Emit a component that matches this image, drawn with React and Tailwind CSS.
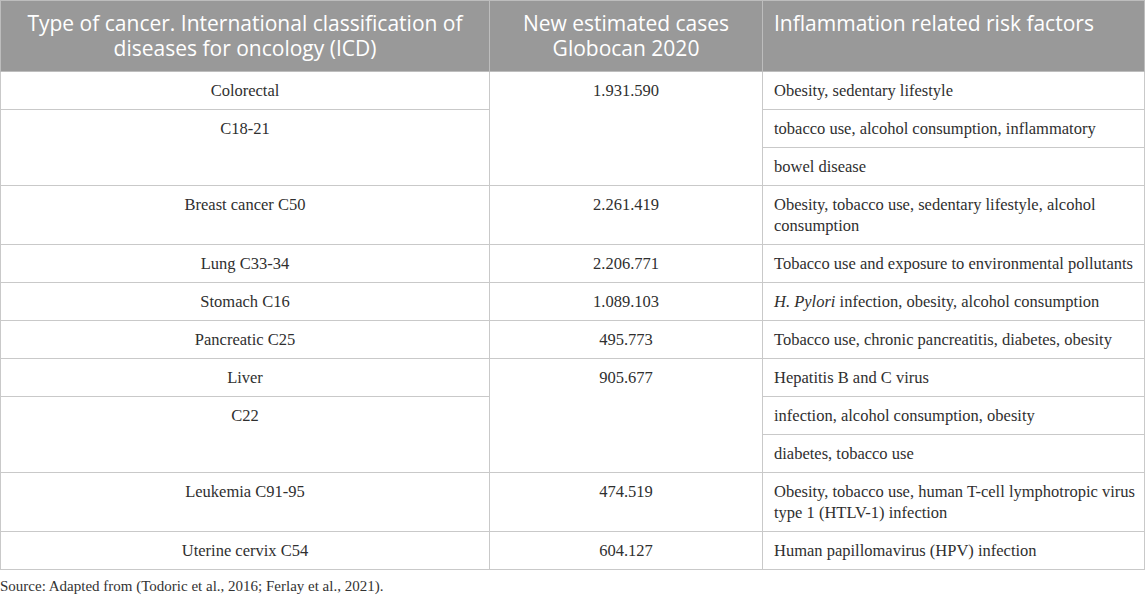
import React from 'react';

const rows = [
  { type: 'Colorectal', cases: '1.931.590', casesSpan: 3, risk: 'Obesity, sedentary lifestyle' },
  { type: 'C18-21', typeSpan: 2, risk: 'tobacco use, alcohol consumption, inflammatory' },
  { risk: 'bowel disease' },
  { type: 'Breast cancer C50', cases: '2.261.419', risk: 'Obesity, tobacco use, sedentary lifestyle, alcohol consumption' },
  { type: 'Lung C33-34', cases: '2.206.771', risk: 'Tobacco use and exposure to environmental pollutants' },
  { type: 'Stomach C16', cases: '1.089.103', risk: (<><i>H. Pylori</i> infection, obesity, alcohol consumption</>) },
  { type: 'Pancreatic C25', cases: '495.773', risk: 'Tobacco use, chronic pancreatitis, diabetes, obesity' },
  { type: 'Liver', cases: '905.677', casesSpan: 3, risk: 'Hepatitis B and C virus' },
  { type: 'C22', typeSpan: 2, risk: 'infection, alcohol consumption, obesity' },
  { risk: 'diabetes, tobacco use' },
  { type: 'Leukemia C91-95', cases: '474.519', risk: 'Obesity, tobacco use, human T-cell lymphotropic virus type 1 (HTLV-1) infection' },
  { type: 'Uterine cervix C54', cases: '604.127', risk: 'Human papillomavirus (HPV) infection' },
];

export default function App() {
  const cell = "border border-[#c9c9c9] align-top pt-[8px] pb-[8px] font-['Liberation_Serif'] text-[16.5px] leading-[21px] text-[#2f2f2f]";
  const head = "border border-[#bdbdbd] align-top pt-[10px] pb-[10px] px-[11px] text-white font-normal text-[21px] leading-[25px] font-['Open_Sans']";

  return (
    <div className="w-[1145px] h-[599px] bg-white overflow-hidden">
      <table className="w-[1145px] border-collapse table-fixed">
        <colgroup>
          <col className="w-[489px]" />
          <col className="w-[273px]" />
          <col />
        </colgroup>
        <thead>
          <tr className="bg-[#999999]">
            <th className={`${head} text-center`}>Type of cancer. International classification of diseases for oncology (ICD)</th>
            <th className={`${head} text-center`}>New estimated cases Globocan 2020</th>
            <th className={`${head} text-left`}>Inflammation related risk factors</th>
          </tr>
        </thead>
        <tbody>
          {rows.map((r, i) => (
            <tr key={i}>
              {r.type !== undefined && (
                <td rowSpan={r.typeSpan || 1} className={`${cell} px-[11px] text-center`}>{r.type}</td>
              )}
              {r.cases !== undefined && (
                <td rowSpan={r.casesSpan || 1} className={`${cell} px-[11px] text-center`}>{r.cases}</td>
              )}
              <td className={`${cell} pl-[11px] pr-[2px] text-left`}>{r.risk}</td>
            </tr>
          ))}
        </tbody>
      </table>
      <p className="font-['Liberation_Serif'] text-[15px] leading-[18px] text-[#333] mt-[7px]">
        Source: Adapted from (Todoric et al., 2016; Ferlay et al., 2021).
      </p>
    </div>
  );
}
